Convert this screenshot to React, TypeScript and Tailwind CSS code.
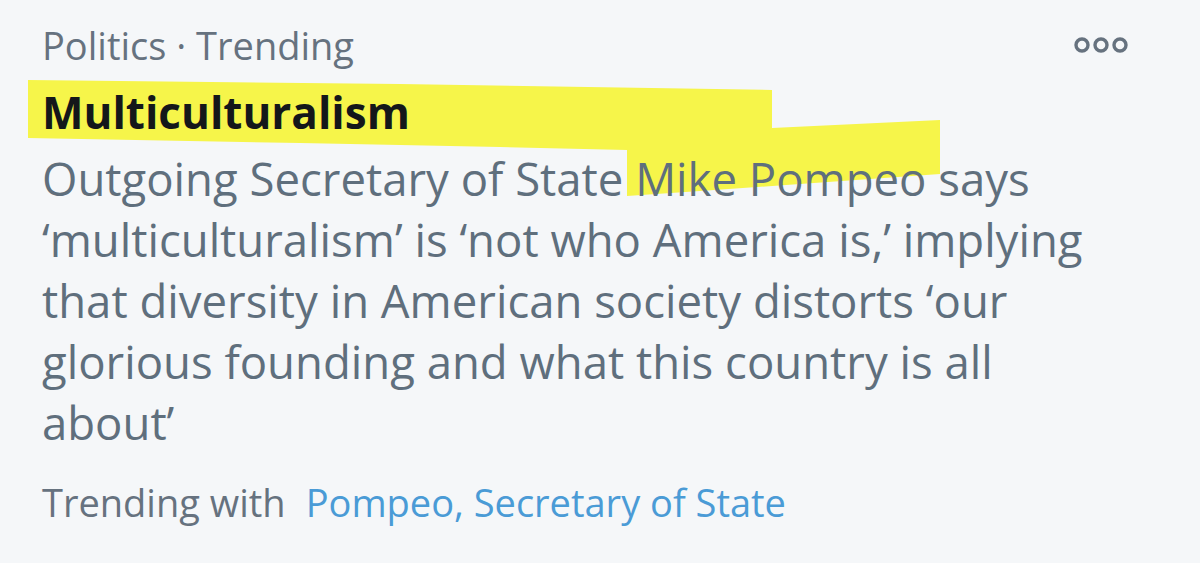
import React from 'react';

const bodyLines = [
  'Outgoing Secretary of State Mike Pompeo says',
  '‘multiculturalism’ is ‘not who America is,’ implying',
  'that diversity in American society distorts ‘our',
  'glorious founding and what this country is all',
  'about’',
];

function MoreDots() {
  return (
    <svg width="58" height="20" viewBox="0 0 58 20" className="text-[#66727f]">
      {[10, 29, 48].map((cx) => (
        <circle key={cx} cx={cx} cy="10" r="6" fill="none" stroke="currentColor" strokeWidth="3.4" />
      ))}
    </svg>
  );
}

function Highlight() {
  // marker stroke drawn behind the title and "Mike Pompeo"
  return (
    <svg className="absolute left-0 top-0 pointer-events-none" width="1200" height="563">
      <polygon
        fill="#f6f54a"
        points="28,80 400,84 772,90 772,128 940,120 940,174 800,184 700,191 627,196 627,150 500,147 300,143 28,138"
      />
    </svg>
  );
}

export default function App() {
  return (
    <div className="relative w-[1200px] h-[563px] bg-[#f5f7f9] overflow-hidden" style={{ fontFamily: '"Open Sans", "Noto Sans", sans-serif' }}>
      <Highlight />
      <div className="relative flex flex-col pl-[42px] pt-[20px]">
        <div className="flex items-center justify-between pr-[70px] h-[50px]">
          <span className="text-[38px] leading-[50px] text-[#66727f]">Politics · Trending</span>
          <MoreDots />
        </div>
        <div className="mt-[12px] text-[44px] leading-[61px] font-bold text-[#14171a]">Multiculturalism</div>
        <div className="mt-[5px] text-[45.5px] leading-[61px] text-[#5f6f7d]">
          {bodyLines.map((l) => (
            <div key={l} className="whitespace-nowrap">{l}</div>
          ))}
        </div>
        <div className="mt-[24px] flex gap-[20px] text-[38px] leading-[50px] whitespace-nowrap">
          <span className="text-[#66727f]">Trending with</span>
          <span className="text-[#4a9bd6]">Pompeo, Secretary of State</span>
        </div>
      </div>
    </div>
  );
}
